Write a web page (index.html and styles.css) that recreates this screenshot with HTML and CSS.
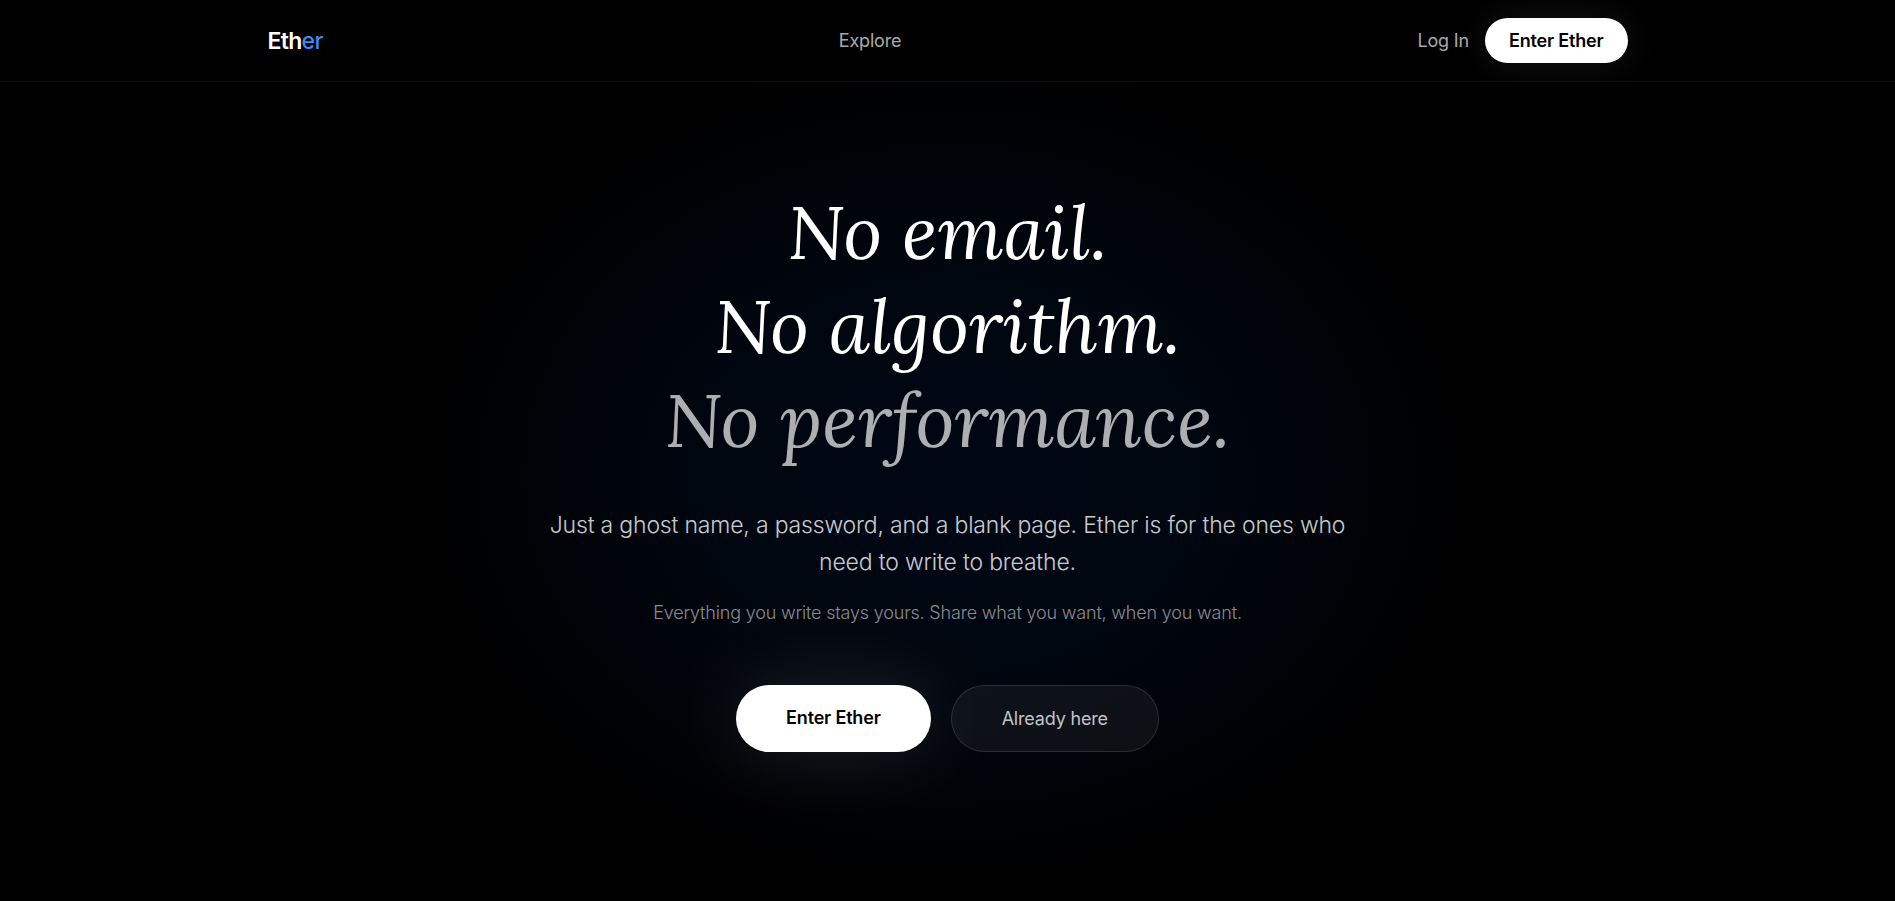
FILE: index.html
```html
<!doctype html>
<html lang="en">
  <head>
    <meta charset="utf-8">
    <meta name="viewport" content="width=device-width, initial-scale=1">
    <title>Ether</title>
    <link rel="stylesheet" href="styles.css">
  </head>
  <body>

    <header class="header">
      <nav class="nav">
        <a class="logo" href="#">Eth<span>er</span></a>
        <a class="nav-link" href="#explore">Explore</a>
        <div class="nav-actions">
          <a class="nav-link" href="#login">Log In</a>
          <a class="btn btn-small" href="#enter">Enter Ether</a>
        </div>
      </nav>
    </header>

    <main class="hero">
      <h1 class="title">
        No email.<br>
        No algorithm.<br>
        <span>No performance.</span>
      </h1>
      <p class="lead">Just a ghost name, a password, and a blank page. Ether is for the ones who need to write to breathe.</p>
      <p class="note">Everything you write stays yours. Share what you want, when you want.</p>
      <div class="actions">
        <a class="btn btn-large" href="#enter">Enter Ether</a>
        <a class="btn-ghost" href="#login">Already here</a>
      </div>
    </main>

  </body>
</html>
```

FILE: styles.css
```css
* {
  box-sizing: border-box;
}
body {
  margin: 0;
  min-height: 100vh;
  display: flex;
  flex-direction: column;
  background: #000;
  color: #fff;
  font-family: Inter, "Liberation Sans", sans-serif;
  font-size: 18px;
  letter-spacing: -0.01em;
}
a {
  color: inherit;
  text-decoration: none;
}

.header {
  border-bottom: 1px solid rgba(255, 255, 255, 0.06);
}
.nav {
  display: flex;
  align-items: center;
  justify-content: space-between;
  max-width: 1400px;
  margin: 0 auto;
  padding: 18px 20px;
}
.logo {
  font-size: 23px;
  font-weight: 600;
  letter-spacing: -0.03em;
}
.logo span {
  color: #3b8bff;
  font-weight: 500;
}
.nav-link {
  color: rgba(255, 255, 255, 0.68);
}
.nav-actions {
  display: flex;
  align-items: center;
  gap: 16px;
}

.btn {
  background: #fff;
  color: #000;
  font-weight: 600;
  text-align: center;
  border-radius: 999px;
}
.btn-small {
  padding: 12px 24px;
  line-height: 21px;
  box-shadow: 0 0 40px rgba(255, 255, 255, 0.08);
}
.btn-large {
  padding: 20px 50px;
  line-height: 25px;
  box-shadow: 0 0 80px rgba(255, 255, 255, 0.12);
}
.btn-ghost {
  padding: 20px 50px;
  line-height: 25px;
  color: rgba(255, 255, 255, 0.75);
  background: rgba(255, 255, 255, 0.05);
  border: 1px solid rgba(255, 255, 255, 0.12);
  border-radius: 999px;
}

.hero {
  flex: 1;
  display: flex;
  flex-direction: column;
  align-items: center;
  padding: 103px 20px;
  text-align: center;
  background: radial-gradient(ellipse 540px 420px at 50% 48%, #000713, #00060f 50%, #000);
}
.title {
  margin: 0;
  font-family: Lora, "Noto Serif", "Liberation Serif", serif;
  font-size: 75px;
  font-style: italic;
  font-weight: 400;
  letter-spacing: 0;
  line-height: 94px;
}
.title span {
  color: rgba(255, 255, 255, 0.68);
}
.lead {
  max-width: 800px;
  margin: 40px 0 0;
  font-size: 23px;
  font-weight: 300;
  line-height: 37px;
  color: rgba(255, 255, 255, 0.8);
}
.note {
  margin: 18px 0 0;
  font-weight: 300;
  line-height: 28px;
  color: rgba(255, 255, 255, 0.54);
}
.actions {
  display: flex;
  gap: 20px;
  margin-top: 58px;
}
```
